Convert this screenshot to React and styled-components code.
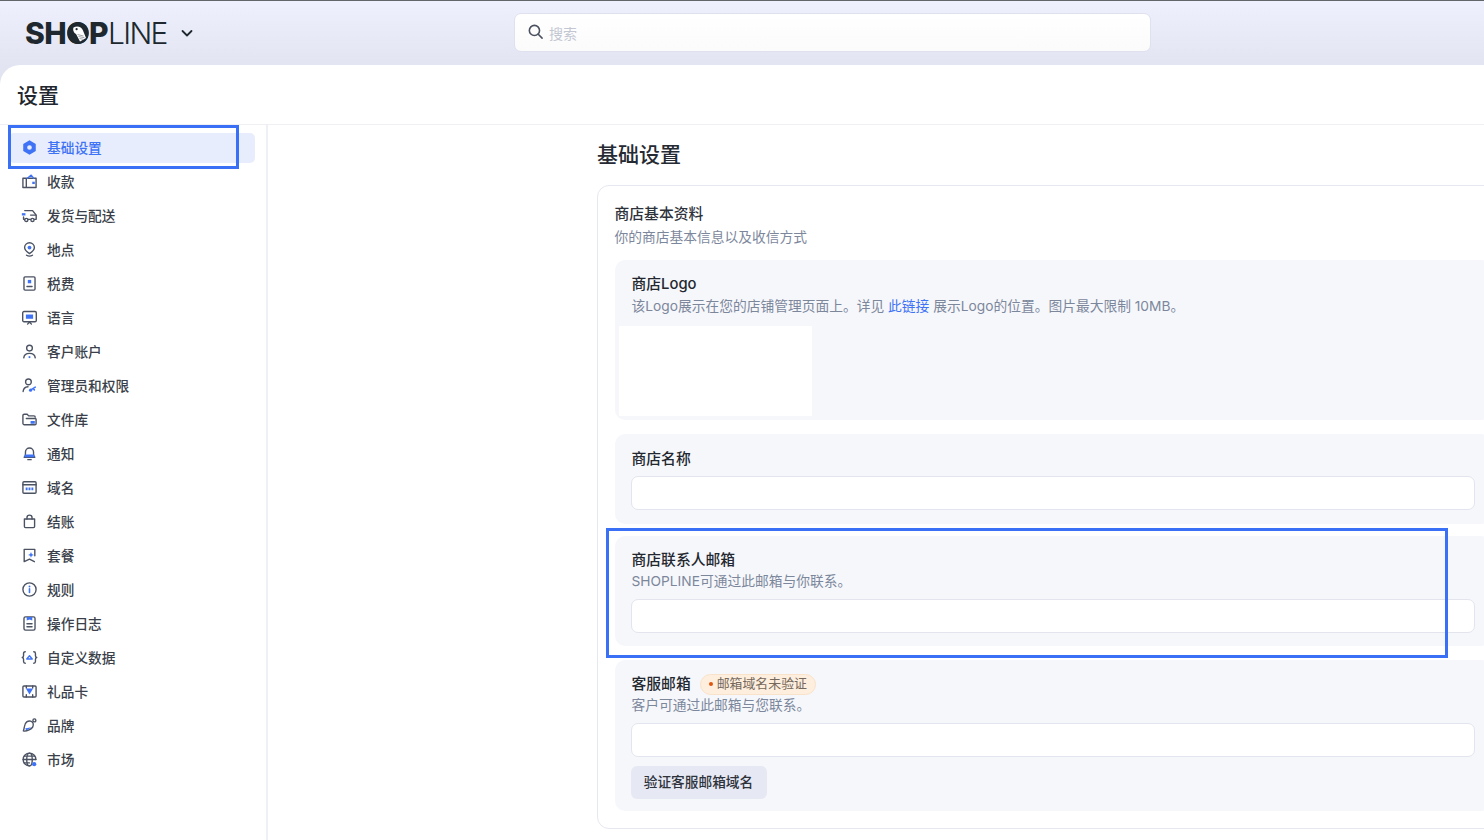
import React from "react";
import styled, { createGlobalStyle } from "styled-components";

const ink = "#4b5262";
const blue = "#3f73f6";

const GlobalStyle = createGlobalStyle`
  html, body {
    margin: 0;
    padding: 0;
    background: #fff;
  }
  body {
    font-family: Inter, "Noto Sans CJK SC", sans-serif;
    color: #2b2f38;
  }
`;

const Page = styled.div`
  position: relative;
  width: 1484px;
  height: 840px;
  overflow: hidden;
  display: flex;
  flex-direction: column;
  background: linear-gradient(180deg, #eef1fd 0, #e2e5f1 65px);
  border-top: 1px solid #63656a;
  box-sizing: border-box;
`;

const TopBar = styled.header`
  height: 64px;
  flex: none;
  display: flex;
  align-items: center;
`;

const LogoWrap = styled.div`
  display: flex;
  align-items: center;
  margin-left: 25px;
  width: 489px;
  flex: none;
  color: #20282f;
`;

const LogoText = styled.span`
  font-family: Inter, sans-serif;
  font-size: 30px;
  line-height: 36px;
  font-weight: ${(p) => (p.$light ? 300 : 800)};
  letter-spacing: ${(p) => (p.$light ? "-1.7px" : "-0.5px")};
`;

const LogoO = styled.span`
  position: relative;
  display: inline-block;
`;

const LogoMark = styled.svg`
  position: absolute;
  left: 1px;
  top: 7px;
  width: 22px;
  height: 22px;
`;

const Chevron = styled.svg`
  width: 14px;
  height: 14px;
  margin-left: 13px;
`;

const SearchBox = styled.div`
  width: 637px;
  height: 39px;
  box-sizing: border-box;
  border: 1.5px solid #dfe2ee;
  border-radius: 7px;
  background: linear-gradient(180deg, #ffffff, #fbfbfc);
  display: flex;
  align-items: center;
  gap: 5px;
  padding-left: 12px;
  margin-top: -1px;
  font-size: 14px;
  color: #c3c7d2;
`;

const SearchIcon = styled.svg`
  width: 17px;
  height: 17px;
  margin-top: -2px;
  fill: none;
  stroke: #4c5160;
  stroke-width: 1.5;
  stroke-linecap: round;
`;

const Body = styled.div`
  flex: 1;
  min-height: 0;
  background: #fff;
  border-top-left-radius: 20px;
  display: flex;
  flex-direction: column;
`;

const PageHeader = styled.div`
  height: 60px;
  flex: none;
  box-sizing: border-box;
  padding: 0 0 2px 17px;
  display: flex;
  align-items: center;
  border-bottom: 1px solid #eff0f4;
  font-size: 21px;
  font-weight: 500;
  color: #22262e;
`;

const Columns = styled.div`
  flex: 1;
  min-height: 0;
  display: flex;
`;

const Sidebar = styled.nav`
  width: 268px;
  flex: none;
  box-sizing: border-box;
  border-right: 2px solid #eef0f5;
  padding: 8px 0 0 9px;
  display: flex;
  flex-direction: column;
  gap: 4px;
`;

const NavItem = styled.div`
  width: 246px;
  height: 30px;
  box-sizing: border-box;
  padding: 0 0 2px 12px;
  border-radius: 5px;
  display: flex;
  align-items: center;
  gap: 9px;
  font-size: 13.7px;
  font-weight: 500;
  background: ${(p) => (p.$active ? "#e8edfd" : "transparent")};
  color: ${(p) => (p.$active ? blue : "#3a3f4a")};
`;

const NavIcon = styled.svg`
  width: 17px;
  height: 17px;
  flex: none;
  fill: none;
  stroke: ${ink};
  stroke-width: 1.3;
  stroke-linecap: round;
  stroke-linejoin: round;
`;

const Content = styled.main`
  flex: 1;
  min-width: 0;
  overflow: hidden;
  padding: 15px 0 0 329px;
`;

const ContentTitle = styled.h1`
  margin: 0 0 15px;
  font-size: 21px;
  line-height: 30px;
  font-weight: 500;
  color: #262a33;
`;

const Card = styled.section`
  width: 912px;
  box-sizing: border-box;
  border: 1.5px solid #e6e8ef;
  border-radius: 12px;
  padding: 18px 17px 17px 16.5px;
`;

const CardTitle = styled.div`
  font-size: 14.8px;
  line-height: 20px;
  font-weight: 500;
  color: #2e323b;
`;

const Hint = styled.div`
  margin-top: ${(p) => p.$top || 0}px;
  padding-left: 1px;
  font-size: 13.75px;
  line-height: 20px;
  color: #7c879c;
`;

const CardHint = styled(Hint)`
  padding-left: 0;
`;

const Block = styled.div`
  margin-top: ${(p) => p.$top}px;
  padding: ${(p) => p.$pad}px 16px ${(p) => p.$bottom}px;
  border-radius: 10px;
  background: #f6f7fb;
`;

const Label = styled.div`
  display: flex;
  align-items: center;
  height: 20px;
  padding-left: 1px;
  font-size: 14.8px;
  line-height: 20px;
  font-weight: 500;
  color: #23272f;
`;

const LinkText = styled.span`
  color: ${blue};
`;

const Blank = styled.div`
  width: 193px;
  height: 90px;
  margin: 10px 0 0 -12px;
  background: #fff;
`;

const Input = styled.div`
  height: 34px;
  margin-top: ${(p) => p.$top}px;
  box-sizing: border-box;
  background: #fff;
  border: 1.5px solid #e3e5ee;
  border-radius: 7px;
`;

const Badge = styled.span`
  display: inline-flex;
  align-items: center;
  gap: 4px;
  height: 21px;
  box-sizing: border-box;
  margin-left: 9px;
  padding: 0 8px;
  background: #fdeedd;
  border: 1px solid #f9e2ca;
  border-radius: 11px;
  font-size: 12.9px;
  font-weight: 400;
  color: #75685c;
`;

const Dot = styled.i`
  width: 4px;
  height: 4px;
  border-radius: 50%;
  background: #e0560e;
`;

const Button = styled.button`
  display: block;
  height: 33px;
  width: 136px;
  margin-top: 9px;
  padding: 0 0 3px;
  border: none;
  border-radius: 6px;
  background: #e6e9f3;
  font-family: inherit;
  font-size: 13.7px;
  font-weight: 500;
  color: #2e323b;
`;

const Marker = styled.div`
  position: absolute;
  left: ${(p) => p.$x}px;
  top: ${(p) => p.$y}px;
  width: ${(p) => p.$w}px;
  height: ${(p) => p.$h}px;
  box-sizing: border-box;
  border: 3px solid #3a70f5;
`;

const A = (props) => <path stroke={blue} {...props} />;
const F = (props) => <path stroke="none" fill={blue} {...props} />;

// two tone menu icons, 16 unit grid
const icons = {
  general: (
    <path
      stroke="none"
      fill={blue}
      fillRule="evenodd"
      d="M8 1.2l5.9 3.4v6.8L8 14.8l-5.9-3.4V4.6L8 1.2zM8 5.8a2.2 2.2 0 100 4.4 2.2 2.2 0 000-4.4z"
    />
  ),
  payment: (
    <>
      <path d="M1.8 5h12.4v8.6H1.8zM5 5v8.6" />
      <path d="M6 5l3.6-3L12 5" stroke={blue} />
      <F d="M10.6 8.2h2.4v2.2h-2.4z" />
    </>
  ),
  shipping: (
    <>
      <path d="M3.5 3.4h7.4l3.4 4.2v4h-1.6M8.8 11.6H6.6M3.4 11.6H2.4V9.4" />
      <circle cx="5" cy="12.2" r="1.5" />
      <circle cx="10.8" cy="12.2" r="1.5" />
      <path d="M9 7.6h5" />
      <F d="M.8 5.8h3.4v2.2H.8z" />
    </>
  ),
  location: (
    <>
      <path d="M8 1.6a4.6 4.6 0 014.6 4.6c0 2.8-2.6 4.4-4.6 5.6-2-1.2-4.6-2.8-4.6-5.6A4.6 4.6 0 018 1.6z" />
      <circle cx="8" cy="6.2" r="1.8" fill={blue} stroke="none" />
      <path d="M5.2 13.4c1.6 1 4 1 5.6 0" />
    </>
  ),
  tax: (
    <>
      <rect x="2.8" y="1.8" width="10.4" height="12.4" rx="1" />
      <F d="M6.4 4.6h3.2v3.2H6.4z" />
      <path d="M5.6 10.8h4.8" />
    </>
  ),
  language: (
    <>
      <rect x="1.6" y="2.4" width="12.8" height="9.6" rx="1.2" />
      <path d="M6.2 14.2L8 12.2l1.8 2" />
      <F d="M4.6 5.2h6.8v4H4.6z" />
    </>
  ),
  customer: (
    <>
      <circle cx="8" cy="4.8" r="2.7" />
      <path d="M2.6 14c.3-2.8 2.4-4.2 5.4-4.2s5.1 1.4 5.4 4.2" />
      <F d="M7.2 12.4h1.6v1.8H7.2z" />
    </>
  ),
  staff: (
    <>
      <circle cx="7" cy="4.6" r="2.7" />
      <path d="M2 13.6c.2-2.8 2-4.2 4.6-4.4" />
      <A d="M9 12.4l4.4-2.8M11.6 10.8l1 1.4" strokeWidth="1.5" />
      <circle cx="9" cy="12.4" r="1.5" fill={blue} stroke="none" />
    </>
  ),
  files: (
    <>
      <path d="M12.6 13H3.2a1.4 1.4 0 01-1.4-1.4V4.2a1.2 1.2 0 011.2-1.2h2.8l1.4 1.6h5a1.2 1.2 0 011.2 1.2" />
      <path d="M5 7h8.4a.8.8 0 01.8.8v4.2a1 1 0 01-1 1" />
      <F d="M9 9.4h4v2.6H9z" />
    </>
  ),
  bell: (
    <>
      <path d="M3 11.6h10c-.9-1-1.2-2-1.2-3.4V6.6a3.8 3.8 0 00-7.6 0v1.6c0 1.4-.3 2.4-1.2 3.4z" />
      <F d="M3.8 9h8.4l.8 2.6H3z" />
      <path d="M6.4 13.8h3.2" />
    </>
  ),
  domain: (
    <>
      <rect x="1.8" y="2.6" width="12.4" height="10.8" rx="1" />
      <path d="M1.8 5.4h12.4" />
      <path stroke={blue} d="M4.4 9.4h7.2" strokeWidth="2.6" strokeDasharray="1.8 .9" strokeLinecap="butt" />
    </>
  ),
  checkout: (
    <>
      <path d="M3.2 5.6h9.6v7.2a1 1 0 01-1 1H4.2a1 1 0 01-1-1z" />
      <path d="M5.6 5.6V4.4a2.4 2.4 0 014.8 0v1.2" />
    </>
  ),
  plan: (
    <>
      <path d="M13 8.2V2.2H3v11.6l5-2.4 4.6 2.4" />
      <F d="M9.4 4.8l.8 1.9 1.9.8-1.9.8-.8 1.9-.8-1.9-1.9-.8 1.9-.8z" />
    </>
  ),
  rules: (
    <>
      <circle cx="8" cy="8" r="6.2" />
      <A d="M8 7.4v3.4" strokeWidth="1.5" />
      <circle cx="8" cy="5.2" r=".9" fill={blue} stroke="none" />
    </>
  ),
  log: (
    <>
      <rect x="2.8" y="1.8" width="10.4" height="12.4" rx="1.4" />
      <F d="M5.4 1.8h5.2v3.4L8 4.2 5.4 5.2z" />
      <path d="M5.6 8.2h4.8M5.6 11h4.8" />
    </>
  ),
  metafield: (
    <>
      <path d="M4 2.6c-1.2 0-1.6.6-1.6 1.6v2.2c0 .9-.4 1.4-1.2 1.6.8.2 1.2.7 1.2 1.6v2.2c0 1 .4 1.6 1.6 1.6" />
      <path d="M12 2.6c1.2 0 1.6.6 1.6 1.6v2.2c0 .9.4 1.4 1.2 1.6-.8.2-1.2.7-1.2 1.6v2.2c0 1-.4 1.6-1.6 1.6" />
      <A d="M5.4 9.4L8 6.4l2.6 3M5.4 9.4h5.2" />
    </>
  ),
  gift: (
    <>
      <rect x="1.8" y="2.8" width="12.4" height="10.4" rx="1" />
      <path d="M5 2.8v2M5 11v2.2M11 2.8v2M11 11v2.2" />
      <F d="M4.6 5.2h6.8L8 10.8z" />
    </>
  ),
  brand: (
    <>
      <path d="M5.4 4.6c2.4-1.6 5.4-.8 6 1.4.7 2.6-1.2 5-3.8 6.2-1.8.8-4.2 1.2-5.4.9.6-1.5.8-2.6 1-4 .2-1.9.8-3.4 2.2-4.5z" />
      <circle cx="12.6" cy="3.2" r="1.4" />
      <F d="M4.2 10.4c1.6.4 3.6 0 5-1.2-.4 1.8-2 3-4.6 3.2z" />
    </>
  ),
  market: (
    <>
      <path d="M14 8a6 6 0 10-6 6" />
      <ellipse cx="8" cy="8" rx="2.6" ry="6" />
      <path d="M2 8h12M3 4.8h10M3 11.2h5" />
      <circle cx="12.4" cy="12.4" r="2" fill={blue} stroke="none" />
    </>
  ),
};

const menu = [
  ["general", "基础设置"],
  ["payment", "收款"],
  ["shipping", "发货与配送"],
  ["location", "地点"],
  ["tax", "税费"],
  ["language", "语言"],
  ["customer", "客户账户"],
  ["staff", "管理员和权限"],
  ["files", "文件库"],
  ["bell", "通知"],
  ["domain", "域名"],
  ["checkout", "结账"],
  ["plan", "套餐"],
  ["rules", "规则"],
  ["log", "操作日志"],
  ["metafield", "自定义数据"],
  ["gift", "礼品卡"],
  ["brand", "品牌"],
  ["market", "市场"],
];

function Logo() {
  return (
    <LogoWrap>
      <LogoText>
        SH
        <LogoO>
          O
          <LogoMark viewBox="0 0 22 22">
            <circle cx="11" cy="11" r="10.8" fill="#20282f" />
            <path d="M6.5 5.5c4-2 8-.6 9.5 3l3 7.5-6 3.5L9 12C7 11 5.5 8 6.5 5.5z" fill="#fff" />
            <circle cx="9.6" cy="7.2" r="1.1" fill="#20282f" />
            <path d="M10.5 12.5l6 1.5M11.5 14.5l6 1.2M12.5 16.5l4 .8" stroke="#8b9096" strokeWidth="0.8" />
          </LogoMark>
        </LogoO>
        P
      </LogoText>
      <LogoText $light>LINE</LogoText>
      <Chevron viewBox="0 0 14 14" fill="none" stroke="#20282f" strokeWidth="1.8" strokeLinecap="round" strokeLinejoin="round">
        <path d="M2.5 5l4.5 4.5L11.5 5" />
      </Chevron>
    </LogoWrap>
  );
}

export default function App() {
  return (
    <Page>
      <GlobalStyle />
      <TopBar>
        <Logo />
        <SearchBox>
          <SearchIcon viewBox="0 0 16 16">
            <circle cx="7" cy="7" r="4.8" />
            <path d="M10.6 10.6l3.6 3.6" />
          </SearchIcon>
          搜索
        </SearchBox>
      </TopBar>
      <Body>
        <PageHeader>设置</PageHeader>
        <Columns>
          <Sidebar>
            {menu.map(([icon, text], i) => (
              <NavItem key={icon} $active={i === 0}>
                <NavIcon viewBox="0 0 16 16">{icons[icon]}</NavIcon>
                {text}
              </NavItem>
            ))}
          </Sidebar>
          <Content>
            <ContentTitle>基础设置</ContentTitle>
            <Card>
              <CardTitle>商店基本资料</CardTitle>
              <CardHint $top={3}>你的商店基本信息以及收信方式</CardHint>
              <Block $top={13} $pad={14} $bottom={4}>
                <Label>商店Logo</Label>
                <Hint $top={2}>
                  该Logo展示在您的店铺管理页面上。详见 <LinkText>此链接</LinkText> 展示Logo的位置。图片最大限制 10MB。
                </Hint>
                <Blank />
              </Block>
              <Block $top={14} $pad={15} $bottom={14}>
                <Label>商店名称</Label>
                <Input $top={7} />
              </Block>
              <Block $top={12} $pad={14} $bottom={13}>
                <Label>商店联系人邮箱</Label>
                <Hint $top={1}>SHOPLINE可通过此邮箱与你联系。</Hint>
                <Input $top={8} />
              </Block>
              <Block $top={14} $pad={14} $bottom={12}>
                <Label>
                  客服邮箱
                  <Badge>
                    <Dot />
                    邮箱域名未验证
                  </Badge>
                </Label>
                <Hint $top={1}>客户可通过此邮箱与您联系。</Hint>
                <Input $top={8} />
                <Button>验证客服邮箱域名</Button>
              </Block>
            </Card>
          </Content>
        </Columns>
      </Body>
      <Marker $x={8} $y={124} $w={231} $h={44} />
      <Marker $x={606} $y={527} $w={842} $h={130} />
    </Page>
  );
}
